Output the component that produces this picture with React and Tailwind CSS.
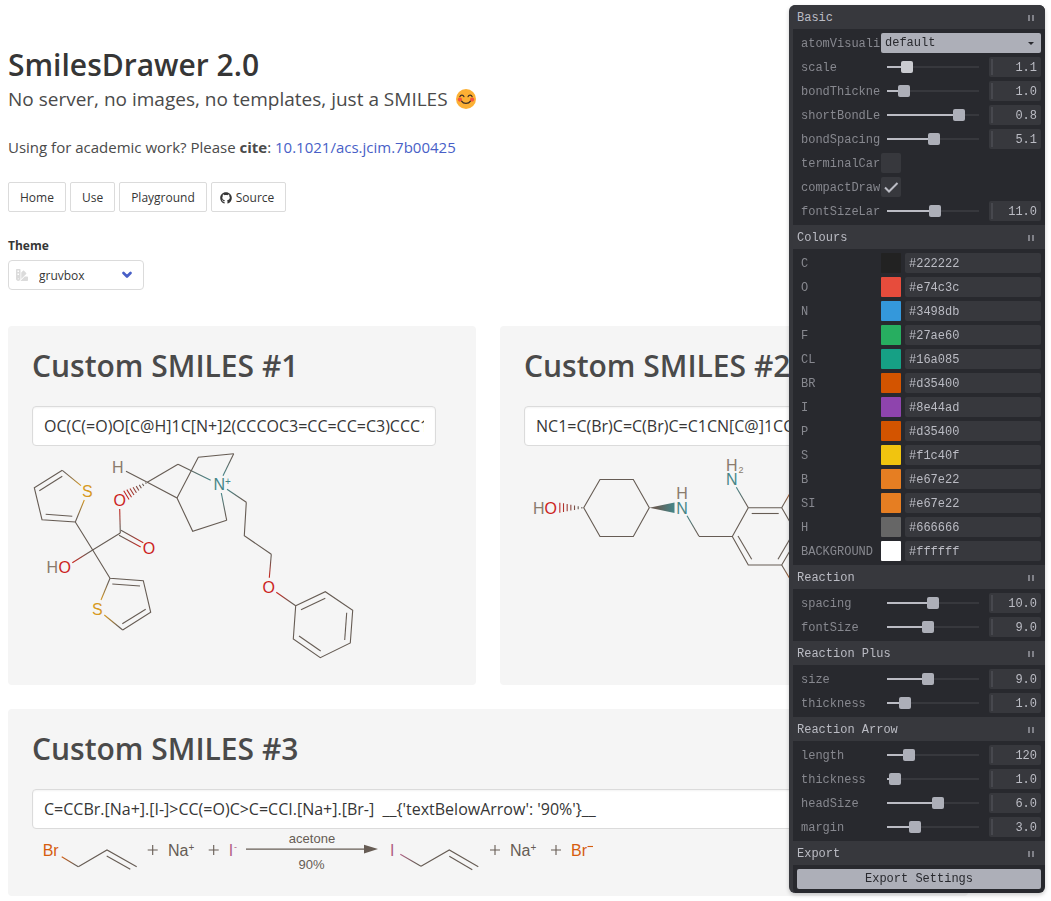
import { useId, useState } from "react";
import { FaGithub, FaSwatchbook } from "react-icons/fa6";

const C = "#665c54";
const H = "#8a7b6d";
const O = "#cc241d";
const N = "#458588";
const S = "#d79921";
const BR = "#d65d0e";
const I = "#b16286";

/* ---------- molecule drawing ---------- */

function Bond({ p, from = C, to = C }) {
  const id = useId();
  const [x1, y1, x2, y2] = p;
  if (from === to) {
    return <line x1={x1} y1={y1} x2={x2} y2={y2} stroke={from} />;
  }
  return (
    <>
      <linearGradient id={id} gradientUnits="userSpaceOnUse" x1={x1} y1={y1} x2={x2} y2={y2}>
        <stop offset="0.2" stopColor={from} />
        <stop offset="1" stopColor={to} />
      </linearGradient>
      <line x1={x1} y1={y1} x2={x2} y2={y2} stroke={`url(#${id})`} />
    </>
  );
}

function HashBond({ p, from = C, to = O, count = 7, width = 10 }) {
  const id = useId();
  const [x1, y1, x2, y2] = p;
  const len = Math.hypot(x2 - x1, y2 - y1);
  const nx = -(y2 - y1) / len;
  const ny = (x2 - x1) / len;
  const strips = Array.from({ length: count }, (_, i) => {
    const t = (i + 0.5) / count;
    const w = (width / 2) * t + 0.4;
    const cx = x1 + (x2 - x1) * t;
    const cy = y1 + (y2 - y1) * t;
    return `M${cx - nx * w} ${cy - ny * w}L${cx + nx * w} ${cy + ny * w}`;
  });
  return (
    <>
      <linearGradient id={id} gradientUnits="userSpaceOnUse" x1={x1} y1={y1} x2={x2} y2={y2}>
        <stop offset="0.2" stopColor={from} />
        <stop offset="1" stopColor={to} />
      </linearGradient>
      <path d={strips.join("")} stroke={`url(#${id})`} />
    </>
  );
}

function Atom({ x, y, color = C, size = 16, anchor = "middle", children }) {
  return (
    <text
      x={x}
      y={y}
      fill={color}
      stroke="none"
      fontSize={size}
      textAnchor={anchor}
      fontFamily="'Liberation Sans', Arial, sans-serif"
    >
      {children}
    </text>
  );
}

function Chain({ points }) {
  return <polyline points={points} stroke={C} />;
}

function MoleculeOne() {
  return (
    <svg className="block" width="404" height="215" viewBox="32 446 404 215" fill="none" strokeWidth="1.1" role="img" aria-label="Structure 1">
      <Chain points="62.3,470.3 34.3,487.7 42,519.7 75.3,522 92.7,550 120.3,533" />
      <Chain points="62.3,476.3 39.3,490.7" />
      <Chain points="45.7,514.3 72.3,516.3" />
      <Bond p={[62.3, 470.3, 81, 485.7]} to={S} />
      <Bond p={[75.3, 522, 84.3, 500]} to={S} />
      <Atom x={87.3} y={497} color={S}>S</Atom>

      <Bond p={[92.7, 550, 72.3, 562.7]} to={O} />
      <Atom x={52.3} y={573} color={H}>H</Atom>
      <Atom x={64.7} y={573} color={O}>O</Atom>
      <Bond p={[121, 530.3, 143.3, 542.7]} to={O} />
      <Bond p={[119, 535.3, 140.7, 547]} to={O} />
      <Atom x={149} y={554} color={O}>O</Atom>
      <Bond p={[120.3, 533, 119.7, 509]} to={O} />
      <Atom x={119.7} y={506} color={O}>O</Atom>
      <HashBond p={[147.3, 482.3, 125, 496]} count={8} />
      <Chain points="126,471.3 147.3,482.3 177,498 192.7,531.3 226.7,520.3" />
      <Atom x={117.7} y={473} color={H}>H</Atom>

      <Chain points="92.7,550 110,578.3 143.3,580.7 150.7,612.3 122.7,630" />
      <Chain points="112.3,584 140,586" />
      <Chain points="145.7,609.3 122.3,623.7" />
      <Bond p={[110, 578.3, 101, 600]} to={S} />
      <Bond p={[122.7, 630, 104.3, 615]} to={S} />
      <Atom x={97.3} y={615} color={S}>S</Atom>

      <Chain points="147.3,482.3 178,464.3" />
      <Bond p={[178, 464.3, 210.7, 480.3]} to={N} />
      <Chain points="177,498 198.3,457.3 233.7,453.7" />
      <Bond p={[233.7, 453.7, 223, 475.7]} to={N} />
      <Bond p={[226.7, 520.3, 221.3, 493]} to={N} />
      <Bond p={[246.3, 502.3, 227, 489.3]} to={N} />
      <Atom x={219.3} y={490} color={N}>N</Atom>
      <Atom x={228} y={485} color={N} size={10}>+</Atom>

      <Chain points="246.3,502.3 244.3,535.7 271.3,554.3" />
      <Bond p={[271.3, 554.3, 269.3, 577.7]} to={O} />
      <Atom x={268.7} y={593} color={O}>O</Atom>
      <Bond p={[295.7, 605.7, 276.3, 592.3]} to={O} />
      <polygon points="295.7,605.7 325.3,591.7 352.7,610.3 350.3,643 320.3,657.7 293.3,639" stroke={C} />
      <Chain points="301,609.7 325.3,598.3" />
      <Chain points="346.7,612.7 344.7,640" />
      <Chain points="320.7,651 299,636" />
    </svg>
  );
}

function MoleculeTwo() {
  const wedge = useId();
  return (
    <svg className="block" width="404" height="215" viewBox="524 446 404 215" fill="none" strokeWidth="1.1" role="img" aria-label="Structure 2">
      <Atom x={538.7} y={514} color={H}>H</Atom>
      <Atom x={550.7} y={514} color={O}>O</Atom>
      <HashBond p={[583.7, 507.7, 558, 507.7]} />
      <polygon points="583.7,507.7 600,479.5 633.3,479.5 649.3,507.7 633.3,536.5 600,536.5" stroke={C} />
      <linearGradient id={wedge} gradientUnits="userSpaceOnUse" x1="649" y1="508" x2="674" y2="508">
        <stop offset="0.3" stopColor={C} />
        <stop offset="1" stopColor={N} />
      </linearGradient>
      <path d="M649.3 507.7L674.5 502.6V513Z" fill={`url(#${wedge})`} />
      <Atom x={682} y={514} color={N}>N</Atom>
      <Atom x={682} y={499} color={H}>H</Atom>
      <Bond p={[699, 536.3, 687, 515.7]} to={N} />
      <Chain points="699,536.5 732.3,536.5" />
      <polygon points="732.3,536.5 748.3,507.7 781.7,507.7 798.3,536.5 781.7,565 748.3,565" stroke={C} />
      <Chain points="751.7,513.5 778.7,513.5" />
      <Chain points="738,536 751.7,559.3" />
      <Chain points="778,559.3 791.7,536" />
      <Bond p={[748.3, 507.7, 736.3, 487.3]} to={N} />
      <Atom x={731.7} y={485} color={N}>N</Atom>
      <Atom x={731.7} y={471} color={H}>H</Atom>
      <Atom x={741} y={473} color={H} size={9}>2</Atom>
      <Bond p={[781.7, 507.7, 793, 488]} to={BR} />
      <Bond p={[781.7, 565, 793, 584]} to={BR} />
    </svg>
  );
}

function Plus({ x, y = 850 }) {
  return <path d={`M${x - 5} ${y}h10M${x} ${y - 5}v10`} stroke={C} />;
}

function ReactionThree() {
  return (
    <svg className="block" width="896" height="43" viewBox="32 829 896 43" fill="none" strokeWidth="1.1" role="img" aria-label="Reaction">
      <Atom x={50.7} y={856} color={BR}>Br</Atom>
      <Bond p={[78.3, 866.7, 61.7, 856.7]} to={BR} />
      <Chain points="78.3,866.7 107,850 136.7,866.7" />
      <Chain points="106.7,856 130.3,869.3" />
      <Plus x={152.7} />
      <Atom x={168} y={856} anchor="start">Na</Atom>
      <Atom x={191.5} y={851} size={10}>+</Atom>
      <Plus x={213.7} />
      <Atom x={231} y={856} color={I}>I</Atom>
      <Atom x={235.5} y={850} color={I} size={9}>-</Atom>

      <Atom x={312} y={843} size={13}>acetone</Atom>
      <path d="M246 849.1H366" stroke={C} />
      <path d="M364 844.8L378 849.1L364 853.6Z" fill={C} />
      <Atom x={311.5} y={869} size={13}>90%</Atom>

      <Atom x={392.3} y={856} color={I}>I</Atom>
      <Bond p={[421, 866.3, 400.3, 854.3]} to={I} />
      <Chain points="421,866.3 449.3,850 478.3,866.7" />
      <Chain points="449.3,856.3 472.3,869.7" />
      <Plus x={495} />
      <Atom x={510} y={856} anchor="start">Na</Atom>
      <Atom x={533.5} y={851} size={10}>+</Atom>
      <Plus x={556} />
      <Atom x={571} y={856} color={BR} anchor="start">Br</Atom>
      <path d="M587.5 846.5h5.5" stroke={BR} />
    </svg>
  );
}

/* ---------- page ---------- */

function Smile() {
  return (
    <svg className="inline-block size-5 ml-2 -mt-1" viewBox="0 0 20 20" role="img" aria-label="Smiling face">
      <circle cx="10" cy="10" r="10" fill="#fcb034" />
      <circle cx="3.9" cy="10.6" r="2.1" fill="#f4533c" />
      <circle cx="16.1" cy="10.6" r="2.1" fill="#f4533c" />
      <g fill="none" stroke="#3f3024" strokeWidth="1.3" strokeLinecap="round">
        <path d="M3.9 7.6C4.6 5.6 7.2 5.6 7.9 7.6" />
        <path d="M12.1 7.6C12.8 5.6 15.4 5.6 16.1 7.6" />
        <path d="M5.6 12.2C7.4 15.2 12.6 15.2 14.4 12.2" />
      </g>
    </svg>
  );
}

function NavLink({ href, icon, children }) {
  return (
    <a
      href={href}
      className={`flex h-[30px] items-center gap-1 rounded-xs border border-[#dbdbdb] bg-white pt-px pr-[11px] text-xs text-[#363636] ${
        icon ? "pl-2" : "pl-[11px]"
      }`}
    >
      {icon}
      {children}
    </a>
  );
}

function SmilesCard({ number, smiles, children, className = "" }) {
  const id = useId();
  return (
    <section className={`rounded-sm bg-[#f5f5f5] px-6 pt-[22px] pb-6 ${className}`}>
      <h2 className="mb-[22px] text-[30px] leading-9 font-semibold text-[#4a4a4a]">
        <label htmlFor={id}>Custom SMILES #{number}</label>
      </h2>
      <div className="pr-4">
        <input
          id={id}
          type="text"
          defaultValue={smiles}
          className="block h-10 w-full rounded-sm border border-[#dbdbdb] bg-white px-[11px] text-base text-[#363636] shadow-[inset_0_1px_2px_rgba(10,10,10,0.05)]"
        />
        <div className="overflow-hidden">{children}</div>
      </div>
    </section>
  );
}

/* ---------- settings pane ---------- */

function Folder({ title, children }) {
  return (
    <section>
      <button type="button" className="flex h-6 w-full items-center justify-between bg-[#37383d] pt-px pr-[11px] pl-1 text-[#bbbcc4]">
        {title}
        <span className="flex gap-0.5">
          <span className="h-1.5 w-0.5 bg-[#808188]" />
          <span className="h-1.5 w-0.5 bg-[#808188]" />
        </span>
      </button>
      <div className="flex flex-col gap-1 py-1 pr-1">{children}</div>
    </section>
  );
}

function Row({ label, htmlFor, children }) {
  return (
    <div className="flex h-5 items-center pl-2">
      <label htmlFor={htmlFor} className="flex-1 overflow-hidden pt-px whitespace-nowrap text-[#87888f]">
        {label}
      </label>
      <div className="flex h-5 w-40 shrink-0 items-center">{children}</div>
    </div>
  );
}

function SliderRow({ label, min = 0, max, value: initial, digits = 1, bright = false }) {
  const id = useId();
  const [value, setValue] = useState(initial);
  const pct = ((value - min) / (max - min)) * 100;
  return (
    <Row label={label} htmlFor={id}>
      <input
        id={id}
        type="range"
        min={min}
        max={max}
        step="any"
        value={value}
        onChange={(e) => setValue(Number(e.target.value))}
        style={{ backgroundImage: `linear-gradient(to right, #bbbcc4 ${pct}%, #37383d ${pct}%)` }}
        className={`h-5 w-[104px] appearance-none bg-[length:calc(100%-12px)_2px] bg-center bg-no-repeat [&::-webkit-slider-thumb]:size-3 [&::-webkit-slider-thumb]:appearance-none [&::-webkit-slider-thumb]:rounded-xs ${
          bright ? "[&::-webkit-slider-thumb]:bg-[#cacbd0]" : "[&::-webkit-slider-thumb]:bg-[#adafb8]"
        }`}
      />
      <div className="ml-1 flex h-5 w-[52px] items-center rounded-xs bg-[#37383d] pl-0.5">
        <span className="h-4 w-0.5 shrink-0 bg-[#47484e]" />
        <input
          type="text"
          aria-label={`${label} value`}
          value={value.toFixed(digits)}
          onChange={(e) => setValue(Number(e.target.value) || 0)}
          className="w-full min-w-0 bg-transparent pt-px pr-1 text-right text-[#bbbcc4]"
        />
      </div>
    </Row>
  );
}

function CheckRow({ label, checked }) {
  const id = useId();
  return (
    <Row label={label} htmlFor={id}>
      <span className="grid size-5">
        <input
          id={id}
          type="checkbox"
          defaultChecked={checked}
          className="peer col-start-1 row-start-1 size-5 appearance-none rounded-xs bg-[#37383d]"
        />
        <svg
          viewBox="0 0 20 20"
          className="pointer-events-none col-start-1 row-start-1 hidden size-5 peer-checked:block"
          fill="none"
          stroke="#bbbcc4"
          strokeWidth="2"
        >
          <path d="M4 10.5L8 14.5L16.5 6" />
        </svg>
      </span>
    </Row>
  );
}

function ColorRow({ label, value }) {
  const id = useId();
  return (
    <Row label={label} htmlFor={id}>
      <button type="button" aria-label={`Pick ${label}`} className="size-5 shrink-0 rounded-[1px]" style={{ backgroundColor: value }} />
      <input id={id} type="text" defaultValue={value} className="ml-1 h-5 w-full min-w-0 rounded-xs bg-[#37383d] px-1 pt-px text-[#bbbcc4]" />
    </Row>
  );
}

const COLOURS = [
  ["C", "#222222"],
  ["O", "#e74c3c"],
  ["N", "#3498db"],
  ["F", "#27ae60"],
  ["CL", "#16a085"],
  ["BR", "#d35400"],
  ["I", "#8e44ad"],
  ["P", "#d35400"],
  ["S", "#f1c40f"],
  ["B", "#e67e22"],
  ["SI", "#e67e22"],
  ["H", "#666666"],
  ["BACKGROUND", "#ffffff"],
];

function SettingsPane() {
  return (
    <aside className="fixed top-[5px] right-1.5 w-64 overflow-hidden rounded-md bg-[#28292e] border-l-4 border-[#37383d] font-['Liberation_Mono','Courier_New',monospace] text-xs leading-5 shadow-[0_2px_4px_rgba(0,0,0,0.2)]">
      <Folder title="Basic">
        <Row label="atomVisualization" htmlFor="atom-vis">
          <div className="grid w-full items-center">
            <select id="atom-vis" className="col-start-1 row-start-1 h-5 w-full appearance-none rounded-xs bg-[#adafb8] px-1 text-[#28292e]">
              <option>default</option>
              <option>balls</option>
            </select>
            <svg className="pointer-events-none col-start-1 row-start-1 mr-[7px] justify-self-end" width="6" height="3" viewBox="0 0 6 3">
              <path d="M0 0H6L3 3Z" fill="#28292e" />
            </svg>
          </div>
        </Row>
        <SliderRow label="scale" max={5} value={1.1} bright />
        <SliderRow label="bondThickness" min={0.1} max={5} value={1} />
        <SliderRow label="shortBondLength" min={0.1} max={1} value={0.8} />
        <SliderRow label="bondSpacing" max={10} value={5.1} />
        <CheckRow label="terminalCarbons" />
        <CheckRow label="compactDrawing" checked />
        <SliderRow label="fontSizeLarge" min={1} max={20} value={11} />
      </Folder>
      <Folder title="Colours">
        {COLOURS.map(([label, value]) => (
          <ColorRow key={label} label={label} value={value} />
        ))}
      </Folder>
      <Folder title="Reaction">
        <SliderRow label="spacing" max={20} value={10} />
        <SliderRow label="fontSize" max={20} value={9} />
      </Folder>
      <Folder title="Reaction Plus">
        <SliderRow label="size" max={20} value={9} />
        <SliderRow label="thickness" max={5} value={1} />
      </Folder>
      <Folder title="Reaction Arrow">
        <SliderRow label="length" max={500} value={120} digits={0} />
        <SliderRow label="thickness" min={0.1} max={10} value={1} />
        <SliderRow label="headSize" min={1} max={10} value={6} />
        <SliderRow label="margin" max={10} value={3} />
      </Folder>
      <Folder title="Export">
        <button type="button" className="ml-1 h-5 rounded-xs bg-[#adafb8] text-center text-[#28292e]">
          Export Settings
        </button>
      </Folder>
    </aside>
  );
}

export default function App() {
  return (
    <div className="bg-white font-['Open_Sans','Noto_Sans',sans-serif] text-[#4a4a4a]">
      <main className="max-w-[976px] px-2 pt-[47px] pb-1">
        <h1 className="text-[30px] leading-9 font-semibold text-[#363636]">SmilesDrawer 2.0</h1>
        <p className="mt-1 text-[19px] leading-[25px]">
          No server, no images, no templates, just a SMILES
          <Smile />
        </p>
        <p className="mt-[23px] text-[15px] leading-6">
          Using for academic work? Please <strong>cite</strong>:{" "}
          <a href="https://doi.org/10.1021/acs.jcim.7b00425" className="text-[#485fc7]">
            10.1021/acs.jcim.7b00425
          </a>
        </p>
        <nav className="mt-[23px] flex gap-1">
          <NavLink href="#home">Home</NavLink>
          <NavLink href="#use">Use</NavLink>
          <NavLink href="#playground">Playground</NavLink>
          <NavLink href="#source" icon={<FaGithub className="size-3" />}>
            Source
          </NavLink>
        </nav>
        <div className="mt-[25px] text-xs">
          <label htmlFor="theme" className="block leading-[18px] font-bold text-[#363636]">
            Theme
          </label>
          <div className="mt-[5px] grid w-[136px] items-center">
            <select id="theme" className="col-start-1 row-start-1 h-[30px] w-full appearance-none rounded-sm border border-[#dbdbdb] bg-white pt-px pl-[30px] text-[#363636]">
              <option>gruvbox</option>
              <option>light</option>
              <option>dark</option>
            </select>
            <FaSwatchbook className="pointer-events-none col-start-1 row-start-1 ml-2 size-3 text-[#dbdbdb]" />
            <svg className="pointer-events-none col-start-1 row-start-1 mr-3 justify-self-end" width="10" height="8" viewBox="0 0 10 8">
              <path d="M1.5 2L5 5.5L8.5 2" fill="none" stroke="#485fc7" strokeWidth="2.6" strokeLinecap="round" strokeLinejoin="round" />
            </svg>
          </div>
        </div>
        <div className="mt-9 grid grid-cols-2 gap-6">
          <SmilesCard number={1} smiles="OC(C(=O)O[C@H]1C[N+]2(CCCOC3=CC=CC=C3)CCC1CC2)(C1=CC=CS1)C1=CC=CS1">
            <MoleculeOne />
          </SmilesCard>
          <SmilesCard number={2} smiles="NC1=C(Br)C=C(Br)C=C1CN[C@]1CC[C@@H](O)CC1">
            <MoleculeTwo />
          </SmilesCard>
          <SmilesCard number={3} className="col-span-2" smiles="C=CCBr.[Na+].[I-]>CC(=O)C>C=CCI.[Na+].[Br-]  __{'textBelowArrow': '90%'}__">
            <ReactionThree />
          </SmilesCard>
        </div>
      </main>
      <SettingsPane />
    </div>
  );
}
